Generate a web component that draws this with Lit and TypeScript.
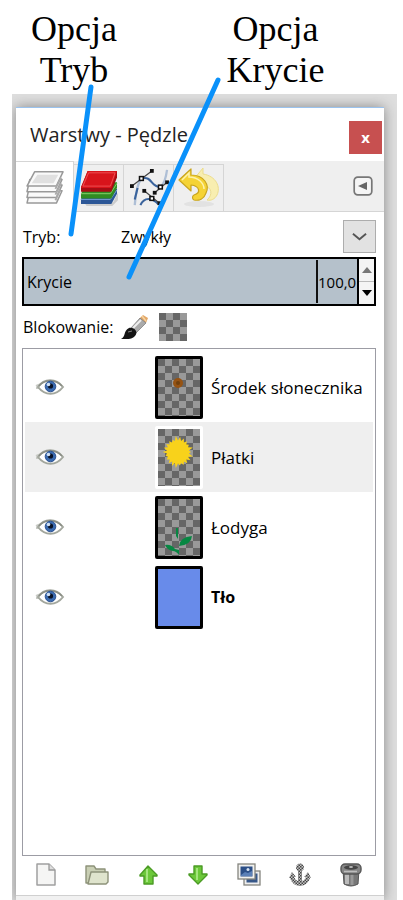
import { LitElement, html, css, svg } from "lit";
import { customElement, state } from "lit/decorators.js";
import { classMap } from "lit/directives/class-map.js";

const layersIcon = svg`<svg viewBox="0 0 42 38" width="40" height="36">
  <g stroke="#999" stroke-width="1.6" stroke-linejoin="round" fill="#fafafa">
    <path d="M5 23 H39 L33 36 H2 Z"/><path d="M5 17 H39 L33 30 H2 Z"/><path d="M5 11 H39 L33 24 H2 Z"/>
    <path d="M10 3 H40 L33 18 H2 Z"/></g>
  <path d="M13 6 H35 L30 15 H7 Z" fill="#e0e0e0"/><path d="M38 9 L32 21 M38 15 L32 27 M37 22 L32 33" stroke="#aaa" stroke-width="2"/>
</svg>`;
const channelsIcon = svg`<svg viewBox="0 0 42 38" width="40" height="36">
  <path d="M5 34 H36 L41 24 V32 L35 38 H8 Z" fill="#ccc"/>
  <path d="M8 20 H40 V25 L34 36 H2 V31 Z" fill="#2c5797"/><path d="M2 31 H33 L40 21" fill="none" stroke="#7ea5dc"/>
  <path d="M8 13 H40 V19 L34 30 H2 V25 Z" fill="#318c22"/><path d="M2 25 H33 L40 14" fill="none" stroke="#87d06d"/>
  <path d="M9 1 H40 V8 L34 23 H2 V18 Z" fill="#a50d14"/><path d="M9 1 H40 L34 19 H2 Z" fill="#d8141b"/>
  <path d="M10 3 H38 L33 17 H4 Z" fill="none" stroke="#ee5054"/>
</svg>`;
const pathsIcon = svg`<svg viewBox="0 0 42 40" width="40" height="38">
  <path d="M6 38 C7 25 9 15 13 10 M34 18 C38 14 39 8 40 1" fill="none" stroke="#aebfd6" stroke-width="2.400"/>
  <path d="M13 10 C25 7 22 19 33 19 M12 38 C16 29 24 30 31 37 M6 32 L9 20" fill="none" stroke="#3a639c" stroke-width="2.200"/>
  <path d="M3 18 L24 2 M27 25 L40 14 M16 23 L32 36" stroke="#444" stroke-width="1.300"/>
  <g fill="#111"><rect x="1" y="16" width="4" height="4"/><rect x="22" y="0" width="4" height="4"/><rect x="25" y="23" width="4" height="4"/><rect x="38" y="12" width="4" height="4"/><rect x="14" y="21" width="4" height="4"/><rect x="30" y="34" width="4" height="4"/></g>
  <g fill="#fff" stroke="#111" stroke-width="1.600"><rect x="11" y="8" width="4" height="4"/><rect x="31" y="17" width="4" height="4"/><rect x="22" y="29" width="4" height="4"/></g>
</svg>`;
const undoIcon = svg`<svg viewBox="0 0 42 40" width="42" height="40">
  <ellipse cx="21" cy="36" rx="15" ry="3" fill="#e2e2e2"/>
  <path d="M16 11 L25 0 V6 C38 8 43 19 39 27 C37 31 33 33 29 32 C35 27 34 19 26 18 V23 Z" fill="#f8eeb0" stroke="#ecdd8c"/>
  <path d="M1 12 L13 1 V7 C26 7 32 17 28 25 C26 31 21 33 16 32 C14 31 14 28 16 27 C23 25 22 18 13 17 V23 Z" fill="#f5d335" stroke="#c9a51e" stroke-width="1.200" stroke-linejoin="round"/>
  <path d="M4 12 L11 5 V9 C20 9 26 15 26 21" fill="none" stroke="#fdf2ac" stroke-width="1.500"/>
</svg>`;
const menuIcon = svg`<svg viewBox="0 0 20 20" width="20" height="20">
  <rect x="1.200" y="1.200" width="17.600" height="17.600" rx="3.500" fill="#f5f5f5" stroke="#777" stroke-width="1.700"/>
  <path d="M5 10 L14 6 V14 Z" fill="#666"/>
</svg>`;
const brushIcon = svg`<svg viewBox="0 0 28 26" width="28" height="26">
  <path d="M18 5 L22 1 L27 4 L25 9 Z" fill="#e3a767"/><path d="M21 2 L25 7" stroke="#f5d4a4" stroke-width="1.400"/>
  <path d="M10 14 L19 4 L25 9 L15 19 Z" fill="#aaa" stroke="#777" stroke-width=".7"/><path d="M12 14 L20 6" stroke="#eee" stroke-width="2"/>
  <path d="M0 25 C5 23 2 17 8 14 C13 13 18 18 14 22 C11 26 5 25 0 25 Z" fill="#141414"/><path d="M7 18 L11 17" stroke="#888"/>
</svg>`;
const eyeIcon = svg`<svg viewBox="0 0 30 16" width="30" height="16">
  <path d="M1 7 L6 5 M1 9 L5 9" stroke="#c9cbc6" stroke-width="2"/>
  <path d="M3 8 C9 -1 21 -1 28 8 C21 17 10 17 3 8 Z" fill="#fff" stroke="#a3a79e" stroke-width="2"/>
  <path d="M4 7 C10 0 20 0 27 7" fill="none" stroke="#8a8e85" stroke-width="1.600"/>
  <circle cx="15.500" cy="7.500" r="5.300" fill="#3b6bb0" stroke="#2b5190"/><circle cx="15.500" cy="7" r="2.600" fill="#0a1225"/><circle cx="13.500" cy="5.500" r="1.800" fill="#cfe0f5"/>
</svg>`;

const toolIcons = [
  { label: "Nowa warstwa", icon: svg`<svg viewBox="0 0 24 24" width="24" height="24"><path d="M3 1 H15 L21 7 V22 H3 Z" fill="#f5f5f4" stroke="#a0a0a0" stroke-width="1.500" stroke-linejoin="round"/><path d="M15 1 V7 H21" fill="#ddd" stroke="#999" stroke-width="1.300"/></svg>` },
  { label: "Nowa grupa", icon: svg`<svg viewBox="0 0 24 24" width="24" height="24"><path d="M1 20 V3 H9 L11 6 H20 V20 Z" fill="#c9cfb4" stroke="#8d9279" stroke-width="1.400" stroke-linejoin="round"/><path d="M6 9 H23 V19 L21 21 H3 Z" fill="#dfe4cd" stroke="#8d9279" stroke-width="1.400" stroke-linejoin="round"/></svg>` },
  { label: "Podnieś", icon: svg`<svg viewBox="0 0 24 24" width="24" height="24"><path d="M12 3 L21 12 V13 H17 V21 H8 V13 H4 V12 Z" fill="#6cc83a" stroke="#4b9b25" stroke-width="1.400" stroke-linejoin="round"/><path d="M11 6 V19" stroke="#a4e57c" stroke-width="2"/></svg>` },
  { label: "Obniż", icon: svg`<svg viewBox="0 0 24 24" width="24" height="24"><path d="M12 21 L3 12 V11 H8 V3 H16 V11 H21 V12 Z" fill="#6cc83a" stroke="#4b9b25" stroke-width="1.400" stroke-linejoin="round"/><path d="M11 5 V17" stroke="#a4e57c" stroke-width="2"/></svg>` },
  { label: "Powiel", icon: svg`<svg viewBox="0 0 24 24" width="24" height="24"><rect x="7" y="8" width="16" height="14" fill="#eee" stroke="#85857f" stroke-width="1.300"/><rect x="9.500" y="10.500" width="11" height="9" fill="#375788"/><rect x="1" y="1" width="17" height="15" fill="#f1f1ee" stroke="#85857f" stroke-width="1.300"/><rect x="3.500" y="3.500" width="12" height="10" fill="#2c4f87"/><path d="M4 12 L8 9 L11 10 L15 8 V13 H4 Z" fill="#5b80b7"/><circle cx="11" cy="6.500" r="1.500" fill="#d8e4f3"/></svg>` },
  { label: "Zakotwicz", icon: svg`<svg viewBox="0 0 24 24" width="24" height="24"><defs><pattern id="dots" width="3" height="3" patternUnits="userSpaceOnUse"><rect width="3" height="3" fill="#c4c4c4"/><rect width="1.500" height="1.500" fill="#444"/><rect x="1.500" y="1.500" width="1.500" height="1.500" fill="#444"/></pattern></defs><path d="M10 8 A4 4 0 1 1 14 8 L14 18 Q17 17 18 14 L16 14 L20 9 L23 15 L22 15 Q20 22 12 23 Q4 22 2 15 L1 15 L4 9 L8 14 L6 14 Q7 17 10 18 Z" fill="url(#dots)"/></svg>` },
  { label: "Usuń", icon: svg`<svg viewBox="0 0 24 24" width="24" height="24"><path d="M4 7 H20 L19 21 Q12 25 5 21 Z" fill="#777" stroke="#555"/><path d="M8 11 V21" stroke="#bbb" stroke-width="4"/><path d="M13 11 V22" stroke="#999" stroke-width="3"/><rect x="2" y="1" width="20" height="10" rx="4" fill="#858585" stroke="#555" stroke-width="1.400"/><ellipse cx="12" cy="4.500" rx="7" ry="2.200" fill="#444"/><ellipse cx="12" cy="4" rx="2" ry="1" fill="#bbb"/><path d="M5 8.500 H18" stroke="#bdbdbd" stroke-width="1.500"/></svg>` },
];

const spikes = Array.from({ length: 44 }, (_, i) => {
  const a = (i / 44) * Math.PI * 2;
  const r = i % 2 ? 11 : 13 + ((i * 7) % 5) * 0.6;
  return `${(20 + Math.cos(a) * r).toFixed(1)},${(23 + Math.sin(a) * r * 1.04).toFixed(1)}`;
}).join(" ");

const layers = [
  { name: "Środek słonecznika", art: svg`<circle cx="20" cy="24" r="5" fill="#965313"/><circle cx="20" cy="24" r="2" fill="#70400f"/>` },
  { name: "Płatki", selected: true, art: svg`<polygon points=${spikes} fill="#f8d21b"/>` },
  { name: "Łodyga", art: svg`<g fill="#078743"><path d="M18 29 H20 V40 L18 37 Z"/><path d="M21 47 Q22 38 34 37 Q33 46 21 47 Z"/><path d="M7 46 Q13 45 17 50 L21 51 V56 Q18 52 15 52 Q9 51 7 46 Z"/></g>` },
  { name: "Tło", solid: true, bold: true, art: "" },
];

@customElement("app-root")
export class AppRoot extends LitElement {
  @state() private opacity = "100,0";

  static styles = css`
    :host { display: block; background: #fff; color: #000; font-family: "Open Sans", "Noto Sans", sans-serif; font-size: 16px; }
    * { box-sizing: border-box; }
    button, input, select { font: inherit; color: inherit; margin: 0; padding: 0; border: 0; background: none; border-radius: 0; }
    button { display: flex; align-items: center; justify-content: center; }
    svg { display: block; flex: none; }
    .page { position: relative; display: flex; flex-direction: column; min-height: 100vh; }
    .notes { display: grid; grid-template-columns: 148px 1fr; height: 94px; padding-top: 9px; text-align: center; font: 36px/41px "Liberation Serif", serif; }
    .notes p { margin: 0; }
    .pointers { position: absolute; left: 0; top: 0; pointer-events: none; stroke: #0a91fa; stroke-width: 5; stroke-linecap: round; }
    .backdrop { flex: 1; display: flex; margin: 0 6px 0 12px; padding: 13px 13px 0 4px; background: #dedede; overflow: hidden; }
    .dock { flex: 1; min-width: 0; display: flex; flex-direction: column; background: #fff; border-top: 1px solid #9bc3ee; box-shadow: 0 0 12px #888; }
    .title { display: flex; align-items: center; justify-content: space-between; height: 53px; padding: 0 2px 0 14px; }
    h1 { margin: 0; font-size: 20px; font-weight: 400; line-height: 28px; color: #222; }
    .close { width: 33px; height: 33px; margin-top: 6px; background: #c75050; color: #fff; font-size: 15px; font-weight: 700; line-height: 20px; padding-bottom: 2px; }
    .tabs { display: flex; height: 51px; background: #efefef; border-bottom: 1px solid #d5d5d5; }
    .tab { width: 50px; margin-top: 3px; border: 1px solid #d5d5d5; border-width: 1px 1px 0 0; }
    .tab.active { width: 58px; height: 51px; margin-top: 0; background: #fff; }
    .menu { width: 20px; margin: 0 11px 0 auto; }
    .content { flex: 1; display: flex; flex-direction: column; padding: 8px 8px 0 6px; }
    .mode { display: grid; grid-template-columns: 98px 1fr; align-items: center; height: 33px; padding-left: 1px; }
    .combo { position: relative; }
    .combo select { appearance: none; width: 100%; height: 33px; }
    .chevron { position: absolute; right: 0; top: 0; width: 33px; height: 33px; padding: 8px; background: #e2e2e2; border: 1px solid #adadad; pointer-events: none; }
    .opacity { display: flex; height: 49px; margin-top: 4px; border: 2px solid #000; background: #b5c1cb; }
    .opacity label { flex: 1; align-self: center; padding-left: 3px; }
    .opacity input { width: 41px; margin: 1px 0; border-left: 2px solid #111; font-size: 15px; }
    .spin { display: flex; flex-direction: column; width: 17px; border-left: 2px solid #000; background: #f4f4f4; }
    .spin button { flex: 1; }
    .spin button + button { border-top: 1px solid #bbb; }
    .locks { display: flex; align-items: center; gap: 8px; height: 42px; padding-left: 1px; }
    .locks .alpha { margin-left: 2px; }
    .list { flex: 1; margin: 0; padding: 3px 2px; list-style: none; border: 1px solid #9c9ca4; }
    .row { display: grid; grid-template-columns: 50px 80px 48px 1fr; align-items: center; height: 70px; }
    .row.selected { background: #efefef; }
    .row.bold { font-weight: 700; }
    .thumb { grid-column: 3; width: 48px; padding: 3px; border-radius: 2px; background: #000; }
    .selected .thumb { background: #fff; }
    .name { justify-content: flex-start; padding-left: 8px; height: 32px; font-size: 17px; white-space: nowrap; }
    .bold .name { font-size: 16px; }
    .tools { display: flex; justify-content: space-between; height: 39px; padding: 0 21px 2px 18px; align-items: center; }
    .foot { height: 5px; background: #f1f1f1; border-top: 1px solid #d0d0d0; }
  `;

  private step(by: number) {
    const value = Math.min(100, Math.max(0, parseFloat(this.opacity.replace(",", ".")) + by));
    this.opacity = value.toFixed(1).replace(".", ",");
  }

  private renderThumb(layer: (typeof layers)[number], i: number) {
    return html`<svg class="thumb" viewBox="0 0 42 57" width="48" height="63" aria-hidden="true">
      <defs><pattern id="check-${i}" width="14" height="14" patternUnits="userSpaceOnUse">
        <rect width="14" height="14" fill="#999"></rect><path d="M0 0H7V7H0ZM7 7H14V14H7Z" fill="#666"></path>
      </pattern></defs>
      <rect width="42" height="57" fill=${layer.solid ? "#688bea" : `url(#check-${i})`}></rect>
      ${layer.art}
    </svg>`;
  }

  render() {
    return html`<main class="page">
      <div class="notes"><p>Opcja<br />Tryb</p><p>Opcja<br />Krycie</p></div>
      <div class="backdrop"><section class="dock">
        <header class="title"><h1>Warstwy - Pędzle</h1><button class="close" aria-label="Zamknij">x</button></header>
        <nav class="tabs">
          <button class="tab active" aria-label="Warstwy">${layersIcon}</button>
          <button class="tab" aria-label="Kanały">${channelsIcon}</button>
          <button class="tab" aria-label="Ścieżki">${pathsIcon}</button>
          <button class="tab" aria-label="Historia">${undoIcon}</button>
          <button class="menu" aria-label="Menu karty">${menuIcon}</button>
        </nav>
        <div class="content">
          <div class="mode"><label for="mode">Tryb:</label>
            <div class="combo"><select id="mode"><option>Zwykły</option></select>
              <svg class="chevron" viewBox="0 0 16 16" aria-hidden="true"><path d="M1 5 L8 11 L15 5" fill="none" stroke="#555" stroke-width="2"></path></svg>
            </div>
          </div>
          <div class="opacity"><label for="opacity">Krycie</label>
            <input id="opacity" type="text" .value=${this.opacity} />
            <div class="spin">
              <button aria-label="Zwiększ" @click=${() => this.step(1)}><svg viewBox="0 0 10 6" width="10" height="6"><path d="M0 6 L5 0 L10 6Z" fill="#777"></path></svg></button>
              <button aria-label="Zmniejsz" @click=${() => this.step(-1)}><svg viewBox="0 0 10 6" width="10" height="6"><path d="M0 0 L5 6 L10 0Z" fill="#000"></path></svg></button>
            </div>
          </div>
          <div class="locks"><span>Blokowanie:</span>
            <button aria-label="Zablokuj piksele">${brushIcon}</button>
            <button class="alpha" aria-label="Zablokuj przezroczystość"><svg viewBox="0 0 28 28" width="28" height="28">
              <rect width="28" height="28" fill="#999"></rect>
              <path d="M0 0h7v7h-7zM14 0h7v7h-7zM7 7h7v7h-7zM21 7h7v7h-7zM0 14h7v7h-7zM14 14h7v7h-7zM7 21h7v7h-7zM21 21h7v7h-7z" fill="#666"></path></svg></button>
          </div>
          <ul class="list">${layers.map((l, i) => html`<li class=${classMap({ row: true, selected: !!l.selected, bold: !!l.bold })}>
            <button aria-label="Widoczność">${eyeIcon}</button>
            ${this.renderThumb(l, i)}
            <button class="name">${l.name}</button>
          </li>`)}</ul>
        </div>
        <div class="tools">${toolIcons.map((t) => html`<button aria-label=${t.label}>${t.icon}</button>`)}</div>
        <div class="foot"></div>
      </section></div>
      <svg class="pointers" width="240" height="290" aria-hidden="true"><path d="M91 87 L71 234 M218 80 L129 277"></path></svg>
    </main>`;
  }
}
